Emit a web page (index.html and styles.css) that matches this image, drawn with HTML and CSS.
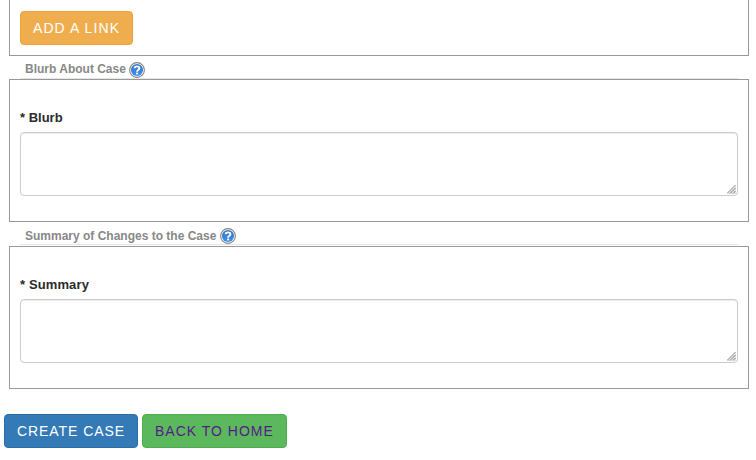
FILE: index.html
```html
<!DOCTYPE html>
<html lang="en">
<head>
<meta charset="utf-8">
<title>Create Case</title>
<link rel="stylesheet" href="styles.css">
</head>
<body>
<svg class="defs" width="0" height="0" aria-hidden="true">
  <defs>
    <linearGradient id="ball" x1="0" y1="0" x2="0" y2="1">
      <stop offset="0" stop-color="#3272c2"/>
      <stop offset="1" stop-color="#3f93ee"/>
    </linearGradient>
    <symbol id="help" viewBox="0 0 16 16">
      <circle cx="8" cy="8" r="7.4" fill="#fff" stroke="#858585" stroke-width="1.1"/>
      <circle cx="8" cy="8" r="6.1" fill="url(#ball)"/>
      <path d="M5.6 6.3C5.6 3.7 10.4 3.7 10.4 6.2C10.4 7.8 8.1 7.7 8.1 9.7" fill="none" stroke="#fff" stroke-width="1.9"/>
      <rect x="7.1" y="10.6" width="2" height="1.8" fill="#fff"/>
    </symbol>
    <symbol id="grip" viewBox="0 0 9 9">
      <path d="M0 9L9 0V9Z" fill="#e4e4e4"/>
      <path d="M0 8.5L8.5 0M3 8.5L8.5 3M6 8.5L8.5 6" fill="none" stroke="#888" stroke-width="1"/>
    </symbol>
  </defs>
</svg>
<main>
  <section class="panel links"><button class="btn warning">ADD A LINK</button></section>
  <h2 class="legend first"><span>Blurb About Case</span><svg class="help"><use href="#help"/></svg></h2>
  <section class="panel">
    <label for="blurb">* Blurb</label>
    <div class="field"><textarea id="blurb"></textarea><svg class="grip"><use href="#grip"/></svg></div>
  </section>
  <h2 class="legend second"><span>Summary of Changes to the Case</span><svg class="help"><use href="#help"/></svg></h2>
  <section class="panel">
    <label class="wide" for="summary">* Summary</label>
    <div class="field"><textarea id="summary"></textarea><svg class="grip"><use href="#grip"/></svg></div>
  </section>
  <div class="actions">
    <button class="btn primary">CREATE CASE</button>
    <a class="btn success" href="#">BACK TO HOME</a>
  </div>
</main>
</body>
</html>
```
FILE: styles.css
```css
* { box-sizing: border-box; }
body {
  margin: 0;
  height: 460px;
  overflow: hidden;
  background: #fff;
  color: #333;
  font-family: "Liberation Sans", Arial, sans-serif;
}
.defs { position: absolute; }
main { display: flex; flex-direction: column; }
.panel {
  width: 740px;
  height: 143px;
  margin-left: 9px;
  padding: 29px 10px 0;
  border: 1px solid #999;
}
.links { height: 56px; padding-top: 11px; border-top: 0; }
.legend {
  display: flex;
  width: 718px;
  margin: 0 0 0 20px;
  padding-left: 5px;
  border-bottom: 1px solid #e5e5e5;
  color: #888;
  font-size: 12px;
  line-height: 16px;
}
.legend.first { height: 23px; padding-top: 5px; }
.legend.second { height: 23px; margin-bottom: 1px; padding-top: 6px; }
.help { flex: none; width: 16px; height: 16px; margin: 1px 0 0 3px; }
.second .help { margin: 0 0 0 3.6px; }
label {
  display: block;
  height: 23px;
  color: #2b2b2b;
  font-size: 13px;
  font-weight: bold;
  line-height: 18px;
}
.wide { letter-spacing: .12px; }
.field { position: relative; }
textarea {
  display: block;
  width: 718px;
  height: 64px;
  border: 1px solid #ccc;
  border-radius: 4px;
  box-shadow: inset 0 1px 1px rgba(0, 0, 0, .075);
  resize: none;
}
.grip { position: absolute; right: 2px; bottom: 2px; width: 9px; height: 9px; }
.actions { display: flex; gap: 4px; margin: 25px 0 0 4px; }
.btn {
  display: block;
  height: 34px;
  padding: 0 0 0 12px;
  border: 1px solid;
  border-radius: 4px;
  font: 14px/32px "Liberation Sans", Arial, sans-serif;
  letter-spacing: 1px;
  text-align: left;
  text-decoration: none;
  white-space: nowrap;
}
.warning { width: 113px; background: #f0ad4e; border-color: #eea236; color: #fff; letter-spacing: 1.08px; }
.primary { width: 134px; background: #337ab7; border-color: #2e6da4; color: #fff; letter-spacing: .93px; }
.success { width: 145px; background: #5cb85c; border-color: #4cae4c; color: #551a8b; }
```
